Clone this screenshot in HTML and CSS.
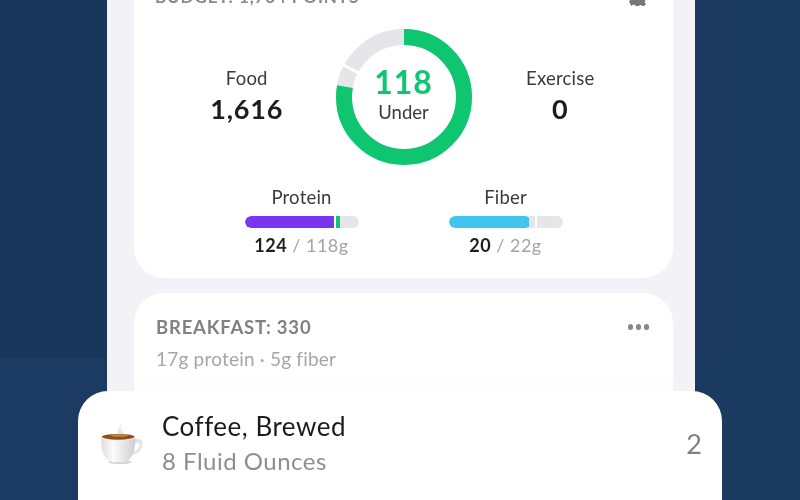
FILE: index.html
```html
<!DOCTYPE html>
<html lang="en">
<head>
<meta charset="utf-8">
<title>Food diary</title>
<link rel="stylesheet" href="styles.css">
</head>
<body>
<div class="stage">
  <div class="backdrop"></div>
  <main class="phone">
    <section class="card summary">
      <header class="summary-head">
        <span class="budget">BUDGET: 1,734 POINTS</span>
        <svg class="gear" viewBox="0 0 20 20"><path d="M8 0h4l.6 2.600 1.800.8 2.300-1.400 2.300 2.800-1.600 2.200.6 1.900 2 .6v4l-2.600.6-.8 1.800 1.400 2.300-2.800 2.300-2.200-1.600-1.900.6-.5 2.400H8l-.6-2.600-1.800-.8-2.300 1.400L1 15.600l1.600-2.200-.6-1.900-2-.6V7l2.600-.6.8-1.800L2 2.300 4.800 0l2.200 1.600z"/></svg>
      </header>
      <div class="stats">
        <div class="stat">
          <span class="stat-label">Food</span>
          <span class="stat-value">1,616</span>
        </div>
        <div class="ring">
          <svg class="ring-svg" viewBox="0 0 136 136">
            <circle class="ring-track" cx="68" cy="68" r="60" pathLength="360"></circle>
            <circle class="ring-fill" cx="68" cy="68" r="60" pathLength="360"></circle>
            <line class="ring-sep" x1="2" y1="33" x2="26" y2="46"></line>
          </svg>
          <div class="ring-text">
            <span class="ring-num">118</span>
            <span class="ring-label">Under</span>
          </div>
        </div>
        <div class="stat">
          <span class="stat-label">Exercise</span>
          <span class="stat-value">0</span>
        </div>
      </div>
      <div class="macros">
        <div class="macro">
          <span class="macro-name">Protein</span>
          <div class="bar">
            <span class="seg seg-purple"></span>
            <span class="seg seg-green"></span>
            <span class="seg seg-rest"></span>
          </div>
          <span class="macro-val"><b>124</b> / 118g</span>
        </div>
        <div class="macro">
          <span class="macro-name">Fiber</span>
          <div class="bar">
            <span class="seg seg-blue"></span>
            <span class="seg seg-mid"></span>
            <span class="seg seg-end"></span>
          </div>
          <span class="macro-val"><b>20</b> / 22g</span>
        </div>
      </div>
    </section>
    <section class="card meal">
      <div class="meal-head">
        <span class="meal-title">BREAKFAST: 330</span>
        <span class="dots"><i></i><i></i><i></i></span>
      </div>
      <p class="meal-sub">17g protein · 5g fiber</p>
    </section>
  </main>
  <article class="float-card">
    <svg class="cup" viewBox="0 0 48 48">
      <defs>
        <linearGradient id="cupBody" x1="0" y1="0" x2="1" y2="0">
          <stop offset="0" stop-color="#dedcdf"/>
          <stop offset=".35" stop-color="#fbfbfb"/>
          <stop offset="1" stop-color="#cfcdd3"/>
        </linearGradient>
        <linearGradient id="steam" x1="0" y1="0" x2="0" y2="1">
          <stop offset="0" stop-color="#f3ece3" stop-opacity=".3"/>
          <stop offset="1" stop-color="#ead8c0"/>
        </linearGradient>
      </defs>
      <path d="M22 2c3 3-1 5 1 8 1 2 2 4 1 7h-5c0-3-1-6 0-8s2-4 3-7z" fill="url(#steam)"/>
      <path d="M33 21c7-3 13-1 11 6-1 5-6 9-12 10l1-3c4-1 7-4 8-7 1-4-3-4-8-2z" fill="#e6e4e6"/>
      <ellipse cx="21" cy="44" rx="12" ry="2" fill="#ddd3c8"/>
      <path d="M1 18c0 12 2 23 12 26h13c9-3 11-14 11-26z" fill="url(#cupBody)"/>
      <ellipse cx="19" cy="18" rx="18" ry="3.600" fill="#efeeee"/>
      <ellipse cx="19" cy="17.500" rx="17" ry="3" fill="#8f4f17"/>
      <ellipse cx="20" cy="16.200" rx="9" ry="1.300" fill="#c0894e"/>
    </svg>
    <div class="food">
      <span class="food-name">Coffee, Brewed</span>
      <span class="food-unit">8 Fluid Ounces</span>
    </div>
    <span class="food-qty">2</span>
  </article>
</div>
</body>
</html>
```
FILE: styles.css
```css
* { box-sizing: border-box; }
html, body { margin: 0; height: 100%; }
body { overflow: hidden; background: #1a3759; font-family: Lato, "Open Sans", sans-serif; }

.stage {
  position: relative;
  width: 800px;
  height: 500px;
  overflow: hidden;
  display: flex;
  justify-content: center;
  background: linear-gradient(90deg, #19365a, #1b3a60);
  filter: blur(0.55px);
}
.backdrop {
  position: absolute;
  left: 0;
  right: 0;
  top: 358px;
  bottom: 0;
  background: linear-gradient(90deg, #1b3b63, #1b3a60);
}

.phone {
  position: relative;
  width: 588px;
  margin-left: 2px;
  height: 500px;
  padding: 0 22px 0 27px;
  background: #f2f2f7;
  display: flex;
  flex-direction: column;
  gap: 15px;
}
.card { background: #fff; width: 539px; }

.summary {
  height: 278px;
  border-radius: 0 0 30px 30px;
  padding: 0 24px 0 21px;
  display: flex;
  flex-direction: column;
}
.summary-head {
  height: 0;
  display: flex;
  justify-content: space-between;
  align-items: center;
  color: #8a8a8f;
}
.budget { font-size: 17px; font-weight: 700; letter-spacing: 0.9px; line-height: 20px; margin-top: -7px; }
.gear { width: 20px; height: 20px; fill: #77777b; margin-top: -8px; margin-right: 1px; }

.stats {
  margin-top: 29px;
  padding-left: 3px;
  display: flex;
  align-items: center;
  justify-content: center;
}
.stat {
  width: 180px;
  padding-top: 4px;
  display: flex;
  flex-direction: column;
  align-items: center;
}
.stat-label { font-size: 18.500px; line-height: 20px; color: #3a3a3c; letter-spacing: 0.2px; margin-top: -2px; }
.stat-value { font-size: 27px; line-height: 38px; font-weight: 700; letter-spacing: 0.8px; color: #1c1c1e; margin-top: 2px; }

.ring { position: relative; width: 136px; height: 136px; flex: none; }
.ring-svg { display: block; width: 136px; height: 136px; }
.ring-track, .ring-fill { fill: none; stroke-width: 16; transform: rotate(-90deg); transform-origin: 68px 68px; }
.ring-track { stroke: #e5e5ea; }
.ring-fill { stroke: #0dc66f; stroke-dasharray: 280 360; }
.ring-sep { stroke: #fff; stroke-width: 3; }
.ring-text {
  position: absolute;
  inset: 0;
  display: flex;
  flex-direction: column;
  align-items: center;
  justify-content: center;
}
.ring-num { font-size: 32px; line-height: 34px; font-weight: 700; color: #0dc66f; letter-spacing: 1px; margin-top: -5px; }
.ring-label { font-size: 18.500px; line-height: 24px; color: #3a3a3c; margin-top: 1px; }

.macros {
  margin-top: 21px;
  display: flex;
  justify-content: center;
  gap: 90px;
  padding-left: 3px;
}
.macro { width: 114px; display: flex; flex-direction: column; align-items: center; }
.macro-name { font-size: 18.500px; line-height: 22px; color: #3a3a3c; letter-spacing: 0.2px; }
.macro-val { font-size: 18px; line-height: 22px; color: #a4a4a8; letter-spacing: 0.5px; }
.macro-val b { color: #1f1f21; font-weight: 700; }

.bar {
  width: 114px;
  height: 12px;
  margin: 8px 0 6px;
  border-radius: 6px;
  overflow: hidden;
  display: flex;
}
.seg { display: block; height: 100%; }
.seg-purple { width: 89px; background: #7a35f0; border-radius: 6px 0 0 6px; }
.seg-green { width: 4px; margin-left: 2px; background: #0dc66f; }
.seg-rest { flex: 1; background: #e5e5ea; }
.seg-blue { width: 82px; background: #41c5ee; border-radius: 6px; }
.seg-mid { width: 6px; margin-left: -2px; background: #e5e5ea; }
.seg-end { flex: 1; margin-left: 2px; background: #e5e5ea; }

.meal {
  height: 130px;
  border-radius: 30px 30px 0 0;
  padding: 22px 24px 0 22px;
  background: linear-gradient(#fff 60%, #f8f8fa);
}
.meal-head { display: flex; justify-content: space-between; align-items: center; height: 24px; }
.meal-title { font-size: 18.500px; font-weight: 700; letter-spacing: 0.8px; color: #808085; }
.dots { display: flex; gap: 2.500px; }
.dots i { display: block; width: 5.500px; height: 5.500px; border-radius: 50%; background: #87878c; }
.meal-sub { margin: 9px 0 0; font-size: 19px; line-height: 22px; color: #a6a6aa; letter-spacing: 0.2px; }

.float-card {
  position: absolute;
  left: 78px;
  top: 391px;
  width: 644px;
  height: 120px;
  background: #fff;
  border-radius: 30px 30px 0 0;
  display: flex;
  align-items: flex-start;
  padding: 0 20px 0 22px;
}
.cup { width: 46px; height: 46px; flex: none; margin-top: 29px; }
.food { flex: 1; display: flex; flex-direction: column; margin-left: 16px; margin-top: 17px; }
.food-name { font-size: 26px; line-height: 36px; color: #1c1c1e; letter-spacing: 0.5px; }
.food-unit { font-size: 24px; line-height: 34px; color: #8e8e93; letter-spacing: 0.5px; }
.food-qty { font-size: 27px; line-height: 32px; color: #808084; margin-top: 37px; }
```
